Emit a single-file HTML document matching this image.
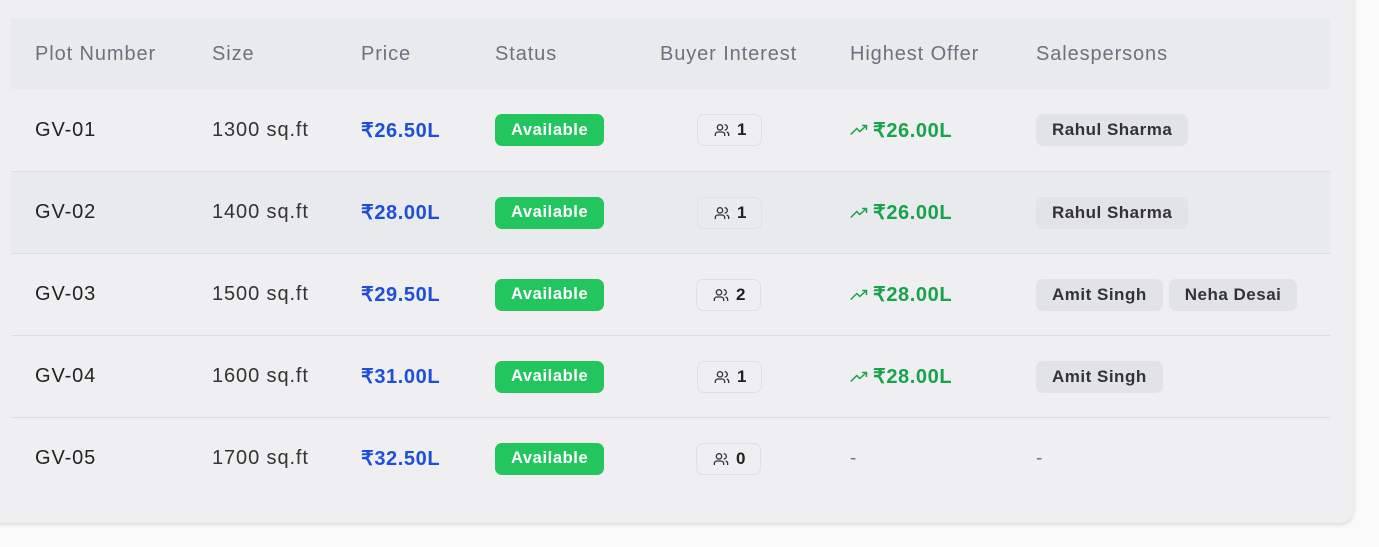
<!DOCTYPE html>
<html><head><style>
*{margin:0;padding:0;box-sizing:border-box}
body{width:1379px;height:547px;background:#fafafa;font-family:"Liberation Sans",sans-serif;position:relative;overflow:hidden}
.card{position:absolute;left:-20px;top:-20px;width:1374px;height:543px;background:#efeff1;border-radius:14px;box-shadow:0 2px 4px rgba(0,0,0,.12)}
.row{position:absolute;left:11px;width:1319px;height:82px}
.hd{top:18px;height:71px;background:#e9eaec;color:#6b7280;font-size:20px;letter-spacing:0.9px}
.row div{position:absolute;top:0;height:100%;display:flex;align-items:center;white-space:nowrap}
.sep{border-top:1px solid #dcdde0}
.alt{background:#e9eaed}
.c1,.c2,.c3{font-size:20px;letter-spacing:0.9px}
.c1{left:24px;color:#222}
.c2{left:201px;color:#333}
.c3{left:350px;color:#1d4fd8;font-weight:bold;letter-spacing:0.6px}
.hd div{color:#6b7280!important;font-weight:normal!important;padding-top:2px}
.badge{background:#22c55e;color:#fff;font-weight:bold;font-size:16.5px;letter-spacing:0.6px;height:32px;padding:0 16px;border-radius:7px;display:flex;align-items:center}
.bi{border:1px solid #dfe0e3;border-radius:7px;height:32px;padding:0 15px;display:flex;align-items:center;gap:6px;font-weight:bold;font-size:17px;color:#222}
.off{color:#16a34a;font-weight:bold;font-size:20px;letter-spacing:0.6px;gap:5px}
.sp{background:#e2e3e7;border-radius:7px;height:32px;padding:0 16px;font-weight:bold;font-size:17px;letter-spacing:0.5px;color:#333;display:flex;align-items:center;margin-right:6px}
.dash{color:#777;font-size:19px}
</style></head><body>
<div class="card"></div>
<div class="row hd"><div style="left:24px">Plot Number</div><div style="left:201px">Size</div><div style="left:350px">Price</div><div style="left:484px">Status</div><div style="left:649px">Buyer Interest</div><div style="left:839px">Highest Offer</div><div style="left:1025px">Salespersons</div></div>

<div class="row" style="top:89px"><div class="c1">GV-01</div><div class="c2">1300 sq.ft</div><div class="c3">₹26.50L</div><div style="left:484px"><span class="badge">Available</span></div><div style="left:686px"><span class="bi"><svg width="18" height="16" viewBox="0 0 24 24" fill="none" stroke="#333" stroke-width="2"><circle cx="9" cy="8" r="4"/><path d="M2 21v-2a4 4 0 014-4h6a4 4 0 014 4v2M16 4a4 4 0 010 8M22 21v-2a4 4 0 00-3-3.9"/></svg>1</span></div><div class="off" style="left:839px"><svg width="18" height="12" viewBox="0 0 24 14" fill="none" stroke="#16a34a" stroke-width="2"><path d="M1 13l8-8 4 4 9-8M16 1h6v6"/></svg>₹26.00L</div><div style="left:1025px"><span class="sp">Rahul Sharma</span></div></div>

<div class="row sep alt" style="top:171px"><div class="c1">GV-02</div><div class="c2">1400 sq.ft</div><div class="c3">₹28.00L</div><div style="left:484px"><span class="badge">Available</span></div><div style="left:686px"><span class="bi"><svg width="18" height="16" viewBox="0 0 24 24" fill="none" stroke="#333" stroke-width="2"><circle cx="9" cy="8" r="4"/><path d="M2 21v-2a4 4 0 014-4h6a4 4 0 014 4v2M16 4a4 4 0 010 8M22 21v-2a4 4 0 00-3-3.9"/></svg>1</span></div><div class="off" style="left:839px"><svg width="18" height="12" viewBox="0 0 24 14" fill="none" stroke="#16a34a" stroke-width="2"><path d="M1 13l8-8 4 4 9-8M16 1h6v6"/></svg>₹26.00L</div><div style="left:1025px"><span class="sp">Rahul Sharma</span></div></div>

<div class="row sep" style="top:253px"><div class="c1">GV-03</div><div class="c2">1500 sq.ft</div><div class="c3">₹29.50L</div><div style="left:484px"><span class="badge">Available</span></div><div style="left:685px"><span class="bi"><svg width="18" height="16" viewBox="0 0 24 24" fill="none" stroke="#333" stroke-width="2"><circle cx="9" cy="8" r="4"/><path d="M2 21v-2a4 4 0 014-4h6a4 4 0 014 4v2M16 4a4 4 0 010 8M22 21v-2a4 4 0 00-3-3.9"/></svg>2</span></div><div class="off" style="left:839px"><svg width="18" height="12" viewBox="0 0 24 14" fill="none" stroke="#16a34a" stroke-width="2"><path d="M1 13l8-8 4 4 9-8M16 1h6v6"/></svg>₹28.00L</div><div style="left:1025px"><span class="sp">Amit Singh</span><span class="sp">Neha Desai</span></div></div>

<div class="row sep" style="top:335px"><div class="c1">GV-04</div><div class="c2">1600 sq.ft</div><div class="c3">₹31.00L</div><div style="left:484px"><span class="badge">Available</span></div><div style="left:686px"><span class="bi"><svg width="18" height="16" viewBox="0 0 24 24" fill="none" stroke="#333" stroke-width="2"><circle cx="9" cy="8" r="4"/><path d="M2 21v-2a4 4 0 014-4h6a4 4 0 014 4v2M16 4a4 4 0 010 8M22 21v-2a4 4 0 00-3-3.9"/></svg>1</span></div><div class="off" style="left:839px"><svg width="18" height="12" viewBox="0 0 24 14" fill="none" stroke="#16a34a" stroke-width="2"><path d="M1 13l8-8 4 4 9-8M16 1h6v6"/></svg>₹28.00L</div><div style="left:1025px"><span class="sp">Amit Singh</span></div></div>

<div class="row sep" style="top:417px"><div class="c1">GV-05</div><div class="c2">1700 sq.ft</div><div class="c3">₹32.50L</div><div style="left:484px"><span class="badge">Available</span></div><div style="left:685px"><span class="bi"><svg width="18" height="16" viewBox="0 0 24 24" fill="none" stroke="#333" stroke-width="2"><circle cx="9" cy="8" r="4"/><path d="M2 21v-2a4 4 0 014-4h6a4 4 0 014 4v2M16 4a4 4 0 010 8M22 21v-2a4 4 0 00-3-3.9"/></svg>0</span></div><div class="dash" style="left:839px">-</div><div class="dash" style="left:1025px">-</div></div>
</body></html>
